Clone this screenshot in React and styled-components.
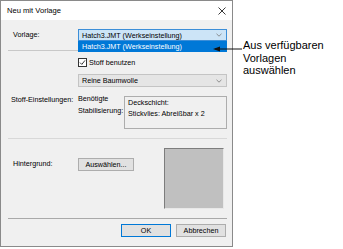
import React from 'react'
import styled, { createGlobalStyle } from 'styled-components'

const Global = createGlobalStyle`
html, body {
  margin: 0;
  padding: 0;
  background: #ffffff;
}
`;

const Page = styled.div`
position: relative;
display: flex;
flex-direction: row;
align-items: flex-start;
width: 343px;
height: 249px;
font-family: "Liberation Sans", Arial, sans-serif;
`;

const Dialog = styled.div`
box-sizing: border-box;
width: 233px;
height: 247px;
border: 1px solid #8a8a8a;
background: #f0f0f0;
display: flex;
flex-direction: column;
`;

const TitleBar = styled.div`
height: 19px;
background: #ffffff;
display: flex;
flex-direction: row;
align-items: center;
justify-content: space-between;
padding: 0 6px 0 6px;
font-size: 7.6px;
color: #000;
`;

const Body = styled.div`
position: relative;
display: flex;
flex-direction: column;
padding: 0 5px 0 7px;
font-size: 7.2px;
color: #000;
`;

const Row = styled.div`
display: grid;
grid-template-columns: 70px 1fr;
align-items: ${p => p.$align || 'center'};
margin-top: ${p => p.$mt}px;
`;

const Label = styled.div`
padding-left: ${p => p.$indent ?? 5}px;
line-height: ${p => p.$lh || 10}px;
margin-top: ${p => p.$mt || 0}px;
white-space: nowrap;
`;

const Combo = styled.div`
position: relative;
box-sizing: border-box;
height: ${p => p.$h}px;
display: flex;
align-items: center;
justify-content: space-between;
padding: 0 4px 0 3px;
border: 1px solid ${p => (p.$open ? '#3c8ed8' : '#c4c4c4')};
background: ${p => (p.$open ? '#cce4f7' : '#e5e5e5')};
white-space: nowrap;
`;

const DropList = styled.div`
position: absolute;
left: -1px;
right: -1px;
top: 11px;
height: 11px;
box-sizing: border-box;
padding-left: 4px;
display: flex;
align-items: center;
background: #0078d7;
color: #ffffff;
white-space: nowrap;
z-index: 2;
`;

const Separator = styled.div`
height: 1px;
margin-top: ${p => p.$mt}px;
background: ${p => p.$tone || '#c8c8c8'};
`;

const CheckRow = styled.label`
display: flex;
align-items: center;
gap: 2px;
height: 9px;
`;

const Box = styled.span`
box-sizing: border-box;
width: 9px;
height: 9px;
border: 1px solid #333;
background: #fff;
display: flex;
align-items: center;
justify-content: center;
`;

const Settings = styled.div`
display: grid;
grid-template-columns: 46px 1fr;
`;

const ReadOnly = styled.div`
box-sizing: border-box;
height: 33px;
border: 1px solid #adadad;
padding: 0 3px;
line-height: 11px;
white-space: nowrap;
`;

const BgRow = styled.div`
display: grid;
grid-template-columns: 70px auto 1fr;
align-items: start;
margin-top: ${p => p.$mt}px;
`;

const Button = styled.div`
box-sizing: border-box;
width: ${p => p.$w}px;
height: 13px;
display: flex;
align-items: center;
justify-content: center;
background: #e1e1e1;
border: 1px solid ${p => (p.$default ? '#0078d7' : '#adadad')};
margin-top: ${p => p.$mt || 0}px;
white-space: nowrap;
`;

const Preview = styled.div`
justify-self: end;
margin-right: 3px;
box-sizing: border-box;
width: 60px;
height: 61px;
background: #c0c0c0;
border-top: 1px solid #7d7d7d;
border-left: 1px solid #7d7d7d;
border-right: 1px solid #e8e8e8;
border-bottom: 1px solid #e8e8e8;
`;

const Footer = styled.div`
display: flex;
justify-content: flex-end;
gap: 5px;
margin-top: 5px;
padding-right: 1px;
`;

const Note = styled.div`
margin: 39px 0 0 10px;
font-size: 11px;
line-height: 12.5px;
color: #000;
`;

const Arrow = styled.svg`
position: absolute;
left: 212px;
top: 45px;
z-index: 3;
`;

const Chevron = () => (
  <svg width="6" height="4" viewBox="0 0 6 4">
    <path d="M0.5 0.8 L3 3.2 L5.5 0.8" fill="none" stroke="#777" strokeWidth="0.8" />
  </svg>
);

export default function App() {
  return (
    <Page>
      <Global />
      <Dialog>
        <TitleBar>
          <span>Neu mit Vorlage</span>
          <svg width="8" height="8" viewBox="0 0 8 8">
            <path d="M0.5 0.5 L7.5 7.5 M7.5 0.5 L0.5 7.5" stroke="#222" strokeWidth="0.9" />
          </svg>
        </TitleBar>
        <Body>
          <Row $mt={9}>
            <Label>Vorlage:</Label>
            <Combo $h={12} $open>
              <span>Hatch3.JMT (Werkseinstellung)</span>
              <Chevron />
              <DropList>Hatch3.JMT (Werkseinstellung)</DropList>
            </Combo>
          </Row>
          <Separator $mt={9} />
          <Row $mt={7}>
            <span />
            <CheckRow>
              <Box>
                <svg width="7" height="7" viewBox="0 0 7 7">
                  <path d="M1 3.6 L2.8 5.4 L6 1.4" fill="none" stroke="#222" strokeWidth="0.9" />
                </svg>
              </Box>
              <span>Stoff benutzen</span>
            </CheckRow>
          </Row>
          <Row $mt={7}>
            <span />
            <Combo $h={13}>
              <span>Reine Baumwolle</span>
              <Chevron />
            </Combo>
          </Row>
          <Row $mt={9} $align="start">
            <Label $indent={3} $mt={-2} $lh={11.5}>Stoff-Einstellungen:</Label>
            <Settings>
              <Label $indent={0} $mt={-3} $lh={11.5}>
                Benötigte<br />Stabilisierung:
              </Label>
              <ReadOnly>
                Deckschicht:<br />Stickvlies: Abreißbar x 2
              </ReadOnly>
            </Settings>
          </Row>
          <Separator $mt={9} $tone="#d8d8d8" />
          <BgRow $mt={9}>
            <Label $mt={11}>Hintergrund:</Label>
            <Button $w={56} $mt={10}>Auswählen...</Button>
            <Preview />
          </BgRow>
          <Separator $mt={9} $tone="#a9a9a9" />
          <Footer>
            <Button $w={50} $default>OK</Button>
            <Button $w={50}>Abbrechen</Button>
          </Footer>
        </Body>
      </Dialog>
      <Note>
        Aus verfügbaren<br />Vorlagen<br />auswählen
      </Note>
      <Arrow width="32" height="8" viewBox="0 0 32 8">
        <path d="M3 4 L30 4" stroke="#111" strokeWidth="1" />
        <path d="M1 4 L8 1.5 L8 6.5 Z" fill="#111" />
      </Arrow>
    </Page>
  );
}
